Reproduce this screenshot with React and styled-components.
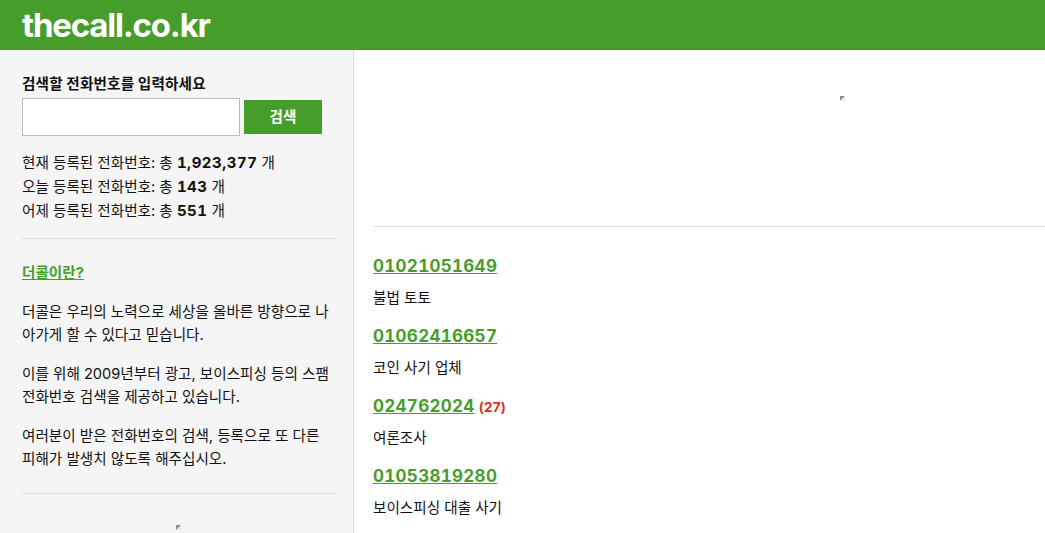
import React from 'react'
import styled, { createGlobalStyle } from 'styled-components'

const stats = [
  { label: '현재', count: '1,923,377' },
  { label: '오늘', count: '143' },
  { label: '어제', count: '551' },
]

const entries = [
  { number: '01021051649', memo: '불법 토토' },
  { number: '01062416657', memo: '코인 사기 업체' },
  { number: '024762024', hits: 27, memo: '여론조사' },
  { number: '01053819280', memo: '보이스피싱 대출 사기' },
]

const BrokenImage = () => (
  <svg width="6" height="6" viewBox="0 0 6 6">
    <path d="M0 0H5L0 5Z" fill="#8f8f8f" />
    <path d="M5 1V5H1Z" fill="#e4e4e4" />
  </svg>
)

const App = () => {
  return (
    <Page>
      <GlobalStyle />
      <Header>
        <Logo>thecall.co.kr</Logo>
      </Header>
      <Body>
        <Sidebar>
          <SearchLabel>검색할 전화번호를 입력하세요</SearchLabel>
          <SearchRow>
            <SearchInput />
            <SearchButton>검색</SearchButton>
          </SearchRow>
          <Stats>
            {stats.map((s) => (
              <StatLine key={s.label}>
                {s.label} 등록된 전화번호: 총 <b>{s.count}</b> 개
              </StatLine>
            ))}
          </Stats>
          <Divider $top={15} />
          <AboutLink>더콜이란?</AboutLink>
          <Paragraph>더콜은 우리의 노력으로 세상을 올바른 방향으로 나아가게 할 수 있다고 믿습니다.</Paragraph>
          <Paragraph>이를 위해 2009년부터 광고, 보이스피싱 등의 스팸 전화번호 검색을 제공하고 있습니다.</Paragraph>
          <Paragraph>여러분이 받은 전화번호의 검색, 등록으로 또 다른 피해가 발생치 않도록 해주십시오.</Paragraph>
          <Divider $top={22} />
          <SideAd><BrokenImage /></SideAd>
        </Sidebar>
        <Main>
          <TopAd><BrokenImage /></TopAd>
          <List>
            {entries.map((e) => (
              <Entry key={e.number}>
                <NumberRow>
                  <NumberLink>{e.number}</NumberLink>
                  {e.hits && <Hits>({e.hits})</Hits>}
                </NumberRow>
                <Memo>{e.memo}</Memo>
              </Entry>
            ))}
          </List>
        </Main>
      </Body>
    </Page>
  )
}

const GlobalStyle = createGlobalStyle`
  html, body {
    margin: 0;
    padding: 0;
    height: 100%;
    overflow: hidden;
    background: #fff;
  }
  * {
    box-sizing: border-box;
  }
`

const Page = styled.div`
  font-family: Inter, "Noto Sans CJK KR", sans-serif;
  font-size: 14.6px;
  color: #111;
  height: 533px;
  overflow: hidden;
`

const Header = styled.header`
  height: 50px;
  background: #479d2c;
  padding-left: 22px;
  display: flex;
  align-items: center;
`

const Logo = styled.div`
  font-family: Inter, sans-serif;
  font-size: 33px;
  font-weight: 700;
  letter-spacing: -1.2px;
  color: #fff;
`

const Body = styled.div`
  display: flex;
  height: 483px;
`

const Sidebar = styled.aside`
  width: 354px;
  flex-shrink: 0;
  background: #f5f5f5;
  border-right: 1px solid #ddd;
  padding: 25px 18px 0 22px;
`

const SearchLabel = styled.div`
  font-weight: 700;
  line-height: 18px;
  letter-spacing: 0.15px;
`

const SearchRow = styled.div`
  display: flex;
  align-items: center;
  gap: 4px;
  margin-top: 5px;
`

const SearchInput = styled.input`
  width: 218px;
  height: 38px;
  border: 1px solid #bbb;
  background: #fff;
`

const SearchButton = styled.button`
  width: 78px;
  height: 34px;
  border: 0;
  padding: 0 0 3px;
  background: #479d2c;
  color: #fff;
  font-family: inherit;
  font-size: 14.6px;
  font-weight: 700;
`

const Stats = styled.div`
  margin-top: 15px;
`

const StatLine = styled.div`
  line-height: 23px;
  b {
    font-weight: 700;
    font-size: 15px;
    font-variant-numeric: tabular-nums;
    letter-spacing: 0.5px;
  }
`

const Divider = styled.hr`
  border: 0;
  border-top: 1px solid #ddd;
  margin: ${(p) => p.$top}px 0 0;
`

const AboutLink = styled.a`
  display: block;
  margin: 22px 0 19px;
  color: #479d2c;
  font-weight: 700;
  text-decoration: underline;
`

const Paragraph = styled.p`
  margin: 16px 0 0;
  line-height: 23px;
`

const SideAd = styled.div`
  display: flex;
  justify-content: center;
  margin-top: 31px;
`

const Main = styled.main`
  flex: 1;
  padding-left: 19px;
`

const TopAd = styled.div`
  height: 177px;
  border-bottom: 1px solid #ddd;
  display: flex;
  padding: 46px 0 0 467px;
`

const List = styled.div`
  padding-top: 28px;
`

const Entry = styled.div`
  margin-bottom: 16px;
`

const NumberRow = styled.div`
  display: flex;
  align-items: baseline;
  gap: 4px;
`

const NumberLink = styled.a`
  color: #479d2c;
  font-size: 17px;
  font-weight: 700;
  font-variant-numeric: tabular-nums;
  letter-spacing: 0.3px;
  text-decoration: underline;
  line-height: 22px;
`

const Hits = styled.span`
  color: #d9301e;
  font-size: 13.5px;
  font-weight: 700;
  letter-spacing: 0.2px;
`

const Memo = styled.div`
  margin-top: 10px;
  line-height: 22px;
`

export default App
